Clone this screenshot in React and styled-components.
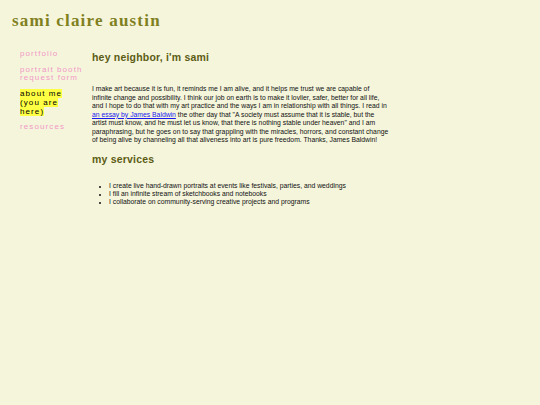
import styled, { createGlobalStyle } from 'styled-components'

const GlobalStyle = createGlobalStyle`
  html, body {
    margin: 0;
    padding: 0;
    background: #f5f5dc;
  }
  body {
    font-family: "Liberation Sans", Arial, sans-serif;
  }
`

const Page = styled.div`
  padding: 10px 12px;
  min-height: 405px;
  box-sizing: border-box;
  background: #f5f5dc;
`

const Title = styled.h1`
  margin: 0;
  font-family: "Liberation Serif", "Times New Roman", serif;
  font-size: 17px;
  font-weight: bold;
  letter-spacing: 1.2px;
  color: #80801e;
  line-height: 22px;
`

const Body = styled.div`
  display: flex;
  margin-top: 17px;
`

const Nav = styled.nav`
  width: 63px;
  flex-shrink: 0;
  padding: 1px 9px 0 8px;
  display: flex;
  flex-direction: column;
  gap: 7px;
`

const NavLink = styled.a`
  font-size: 8px;
  line-height: 8.7px;
  letter-spacing: 1.1px;
  color: ${p => (p.$current ? '#000' : '#f299c6')};
  text-decoration: none;

  span {
    background: ${p => (p.$current ? '#ffff44' : 'transparent')};
  }
`

const Main = styled.main`
  width: 298px;
  padding-top: 1px;
`

const Heading = styled.h2`
  margin: 0;
  font-size: 10.5px;
  font-weight: bold;
  letter-spacing: 0.2px;
  color: #5c5c14;
  line-height: 14px;
`

const Paragraph = styled.p`
  margin: 21px 0 7px;
  font-size: 6.8px;
  line-height: 8.5px;
  color: #111;
`

const Link = styled.a`
  color: #1a1aee;
  text-decoration: underline;
`

const List = styled.ul`
  margin: 16px 0 0;
  padding-left: 17px;
  font-size: 6.8px;
  line-height: 8px;
  color: #111;

  li::marker {
    font-size: 5px;
  }
`

export default function App() {
  return (
    <Page>
      <GlobalStyle />
      <Title>sami claire austin</Title>
      <Body>
        <Nav>
          <NavLink href="#"><span>portfolio</span></NavLink>
          <NavLink href="#"><span>portrait booth request form</span></NavLink>
          <NavLink href="#" $current><span>about me (you are here)</span></NavLink>
          <NavLink href="#"><span>resources</span></NavLink>
        </Nav>
        <Main>
          <Heading>hey neighbor, i'm sami</Heading>
          <Paragraph>
            I make art because it is fun, it reminds me I am alive, and it helps me trust we are capable of
            infinite change and possibility. I think our job on earth is to make it lovlier, safer, better for all life,
            and I hope to do that with my art practice and the ways I am in relationship with all things. I read in{' '}
            <Link href="#">an essay by James Baldwin</Link> the other day that "A society must assume that it is stable, but the
            artist must know, and he must let us know, that there is nothing stable under heaven" and I am
            paraphrasing, but he goes on to say that grappling with the miracles, horrors, and constant change
            of being alive by channeling all that aliveness into art is pure freedom. Thanks, James Baldwin!
          </Paragraph>
          <Heading>my services</Heading>
          <List>
            <li>I create live hand-drawn portraits at events like festivals, parties, and weddings</li>
            <li>I fill an infinite stream of sketchbooks and notebooks</li>
            <li>I collaborate on community-serving creative projects and programs</li>
          </List>
        </Main>
      </Body>
    </Page>
  )
}
